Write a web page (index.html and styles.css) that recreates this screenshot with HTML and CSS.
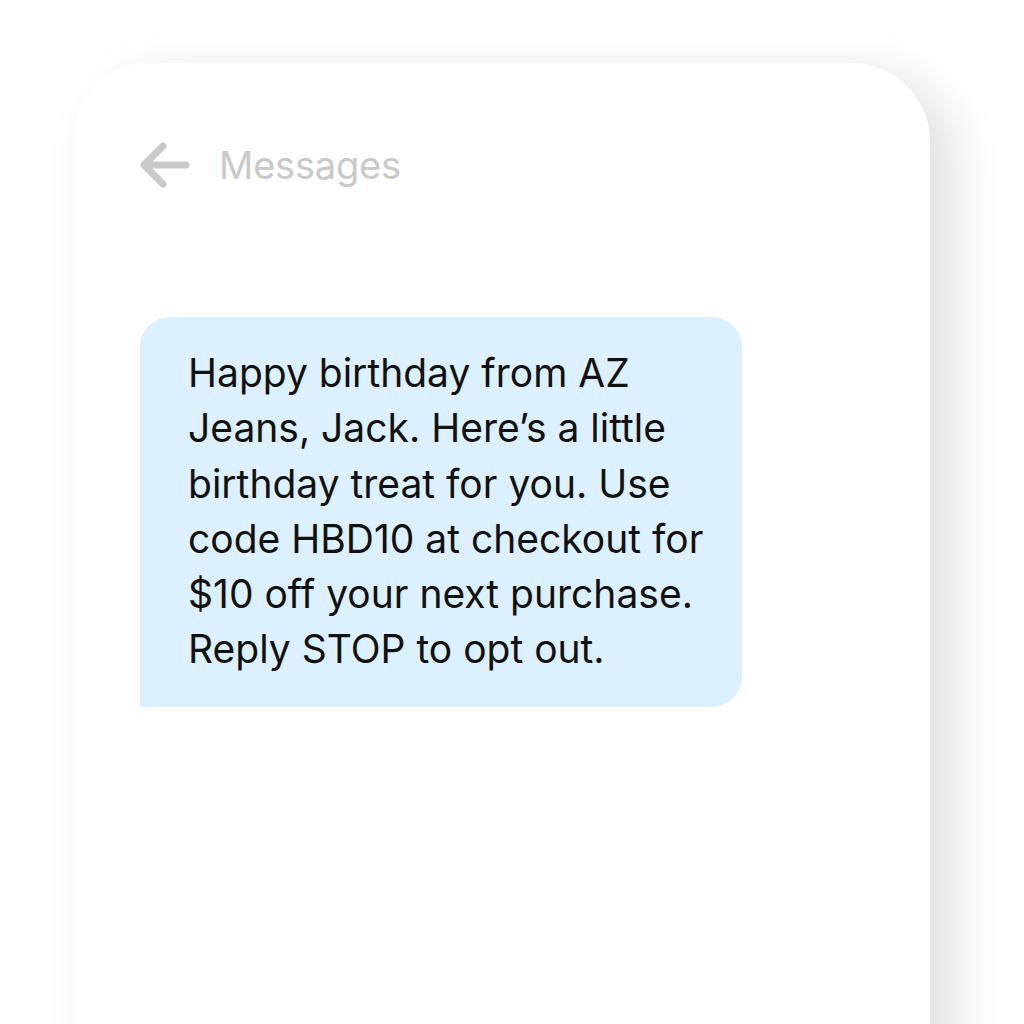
FILE: index.html
```html
<!DOCTYPE html>
<html lang="en">
<head>
    <meta charset="UTF-8">
    <meta name="viewport" content="width=device-width, initial-scale=1.0">
    <title>Messages</title>
    <link rel="stylesheet" href="styles.css">
</head>
<body>
    <div class="phone">
        <div class="header">
            <svg class="back" width="50" height="46" viewBox="0 0 50 46">
                <path d="M46 23 H5 M23 4 L4 23 L23 42" fill="none" stroke="#c9c9c9" stroke-width="7" stroke-linecap="round" stroke-linejoin="round"/>
            </svg>
            <span class="title">Messages</span>
        </div>
        <div class="bubble">
            Happy birthday from AZ<br>
            Jeans, Jack. Here’s a little<br>
            birthday treat for you. Use<br>
            code HBD10 at checkout for<br>
            $10 off your next purchase.<br>
            Reply STOP to opt out.
        </div>
    </div>
</body>
</html>
```

FILE: styles.css
```css
body { margin: 0; background: #fff; font-family: Inter, "Noto Sans", sans-serif; overflow: hidden; }
.phone { margin: 63px 0 0 75px; width: 855px; height: 1100px; background: #fefefe; border-radius: 72px 78px 0 0; box-shadow: 22px 14px 50px rgba(0,0,0,0.13); padding: 80px 0 0 65px; box-sizing: border-box; }
.header { display: flex; align-items: center; gap: 29px; height: 44px; }
.back { margin-left: 0; }
.title { font-size: 38px; color: #c9c9c9; letter-spacing: -0.2px; }
.bubble { margin-top: 130px; width: 602px; box-sizing: border-box; padding: 28px 20px 30px 48px; background: #ddf0fd; border-radius: 30px 30px 30px 0; font-size: 39px; line-height: 55.3px; color: #111; white-space: nowrap; }
```
